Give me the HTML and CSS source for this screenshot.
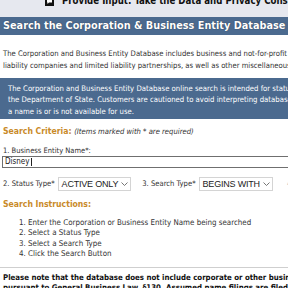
FILE: index.html
```html
<!DOCTYPE html>
<html>
<head>
<meta charset="utf-8">
<link rel="stylesheet" href="styles.css">
</head>
<body>
<div class="topbar">
  <div class="topinner">
    <span class="ficon"><svg width="9" height="9" viewBox="0 0 9 9"><rect x="0" y="0" width="9" height="9" fill="#111"/><path d="M2 2.5 H7 V5.5 H4 L2.5 7 V5.5 H2 Z" fill="#fff"/></svg></span>
    <span class="toptext">Provide Input: Take the Data and Privacy Consumer Survey</span>
  </div>
</div>
<h1 class="banner">Search the Corporation &amp; Business Entity Database</h1>
<div class="page">
  <p class="intro">The Corporation and Business Entity Database includes business and not-for-profit corporations, limited<br>liability companies and limited liability partnerships, as well as other miscellaneous businesses.</p>
  <div class="notice">The Corporation and Business Entity Database online search is intended for statutory searches of entities on file with<br>the Department of State. Customers are cautioned to avoid interpreting database results as a determination that<br>a name is or is not available for use.</div>
  <div class="section-title">Search Criteria: <span class="note">(Items marked with * are required)</span></div>
  <div class="field-label">1. Business Entity Name*:</div>
  <div class="input"><span>Disney</span><span class="caret"></span></div>
  <div class="row">
    <span class="lbl">2. Status Type*</span>
    <span class="select">ACTIVE ONLY <svg width="7" height="4" viewBox="0 0 7 4"><path d="M0.5 0.5 L3.5 3.5 L6.5 0.5" stroke="#666" fill="none" stroke-width="0.9"/></svg></span>
    <span class="lbl lbl3">3. Search Type*</span>
    <span class="select">BEGINS WITH <svg width="7" height="4" viewBox="0 0 7 4"><path d="M0.5 0.5 L3.5 3.5 L6.5 0.5" stroke="#666" fill="none" stroke-width="0.9"/></svg></span>
    <span class="lbl lbl4">4. Search Button</span>
  </div>
  <div class="section-title st2">Search Instructions:</div>
  <ol class="steps">
    <li>Enter the Corporation or Business Entity Name being searched</li>
    <li>Select a Status Type</li>
    <li>Select a Search Type</li>
    <li>Click the Search Button</li>
  </ol>
  <hr class="rule">
  <p class="boldnote">Please note that the database does not include corporate or other business entity filings made<br>pursuant to General Business Law, §130. Assumed name filings are filed with the county clerk.</p>
</div>
</body>
</html>
```
FILE: styles.css
```css
html, body { margin: 0; padding: 0; background: #fff; overflow: hidden; }
body { width: 288px; height: 288px; font-family: "DejaVu Sans Condensed", "DejaVu Sans", sans-serif; font-stretch: condensed; color: #333; }
.topbar { height: 17px; background: #e6e8ef; overflow: hidden; }
.topinner { display: flex; align-items: center; gap: 8px; margin-top: -4px; padding-left: 45px; height: 10px; white-space: nowrap; }
.ficon { display: flex; }
.toptext { font-weight: bold; font-size: 9.6px; line-height: 10px; color: #111; }
.banner { margin: 0; padding: 0 0 0 3px; height: 18px; line-height: 18px; background: #4b6a8f; color: #fff; font-size: 10.8px; font-weight: bold; white-space: nowrap; overflow: hidden; text-shadow: 0 0 1px #1c2c40; }
.page { padding: 0 0 0 3px; white-space: nowrap; }
.intro { margin: 13px 0 0 0; font-size: 7.65px; line-height: 11.5px; }
.notice { margin: 7px 0 0 -3px; padding: 5px 0 2px 8px; background: #4b6a8f; color: #fff; font-size: 7.7px; line-height: 11.3px; }
.section-title { margin-top: 7px; color: #c98a29; font-weight: bold; font-size: 8.6px; line-height: 11px; }
.note { color: #333; font-weight: normal; font-style: italic; font-size: 7.6px; }
.field-label { margin-top: 8px; font-size: 7.5px; line-height: 11px; }
.input { margin: 0 0 0 -1px; height: 10px; border: 1px solid #6f6f6f; border-right: none; display: flex; align-items: center; padding-left: 2px; font-size: 8px; color: #222; }
.caret { width: 1px; height: 8px; background: #222; margin-left: 1px; }
.row { display: flex; align-items: center; margin-top: 9px; font-size: 7.6px; }
.lbl { margin-right: 3px; }
.lbl3 { margin-left: 11px; }
.lbl4 { margin-left: 14px; color: #bbb; }
.select { display: flex; align-items: center; gap: 3px; height: 12px; padding: 0 2px 0 3px; border: 1px solid #d4d4d4; background: #fff; font-family: "Liberation Sans", sans-serif; font-stretch: normal; font-size: 9px; letter-spacing: -0.2px; color: #222; }
.st2 { margin-top: 8.5px; }
.steps { margin: 7.5px 0 0 0; padding-left: 25px; font-size: 7.9px; line-height: 10.5px; }
.rule { margin: 7px 0 0 -3px; border: none; border-top: 1px solid #cfcfcf; }
.boldnote { margin: 5px 0 0 0; font-weight: bold; font-size: 7.8px; line-height: 10.5px; color: #111; }
```
